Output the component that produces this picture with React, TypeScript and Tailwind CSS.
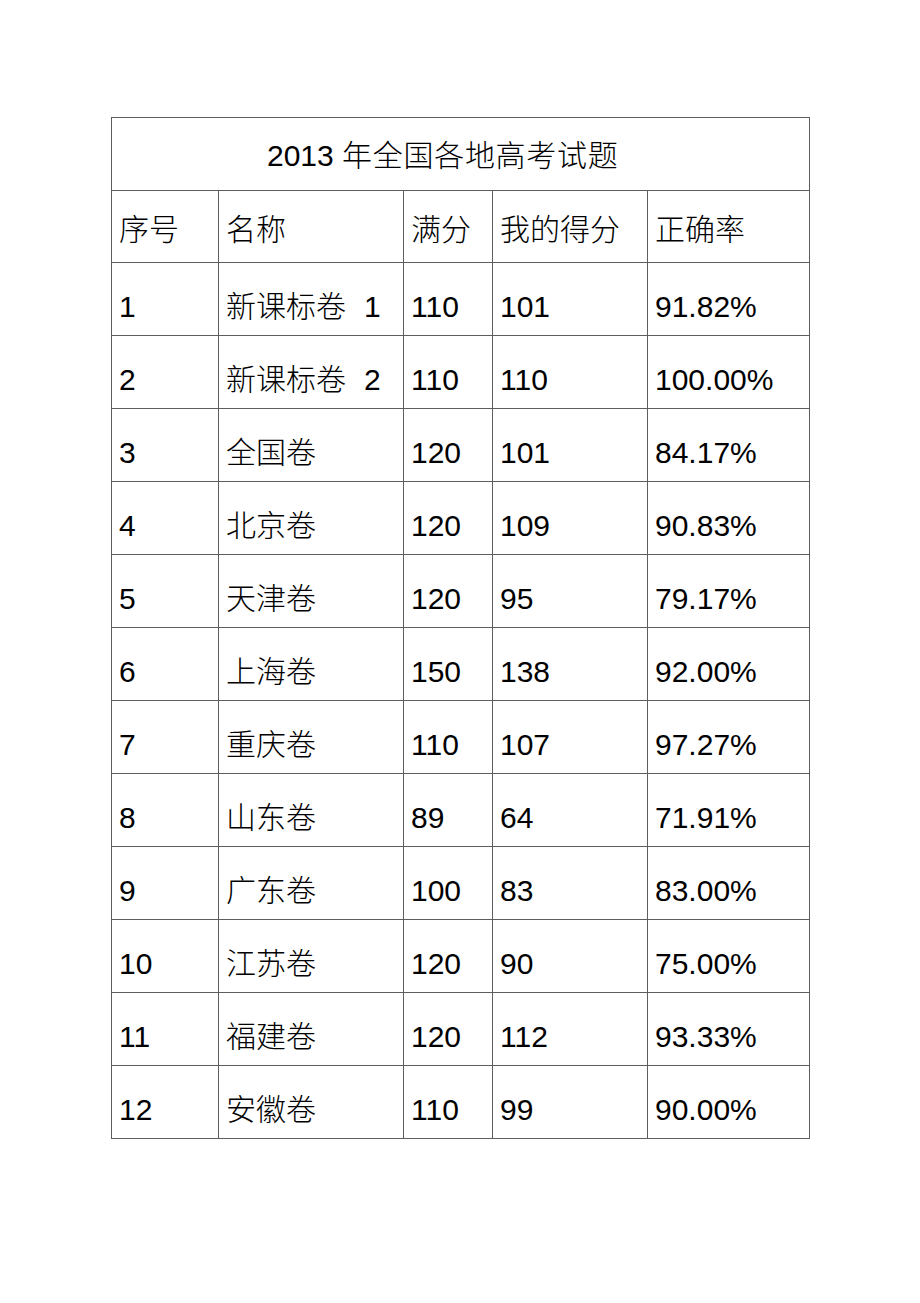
import React from 'react';

type Row = [string, string, string, string, string, string?];

const rows: Row[] = [
  ['1', '新课标卷', '110', '101', '91.82%', '1'],
  ['2', '新课标卷', '110', '110', '100.00%', '2'],
  ['3', '全国卷', '120', '101', '84.17%'],
  ['4', '北京卷', '120', '109', '90.83%'],
  ['5', '天津卷', '120', '95', '79.17%'],
  ['6', '上海卷', '150', '138', '92.00%'],
  ['7', '重庆卷', '110', '107', '97.27%'],
  ['8', '山东卷', '89', '64', '71.91%'],
  ['9', '广东卷', '100', '83', '83.00%'],
  ['10', '江苏卷', '120', '90', '75.00%'],
  ['11', '福建卷', '120', '112', '93.33%'],
  ['12', '安徽卷', '110', '99', '90.00%'],
];

// Chinese text in its own span
const Cjk = ({ children, wide }: { children: React.ReactNode; wide?: boolean }) => (
  <span className={`font-['Noto_Sans_CJK_SC',sans-serif] font-light ${wide ? 'tracking-[0.7px]' : ''}`}>{children}</span>
);

const cell = 'border border-[#5e5e5e] align-bottom pl-[7px]';

const App: React.FC = () => {
  return (
    <div className="min-h-[1303px] w-[920px] bg-white pt-[117px] pl-[111px] text-black font-['Liberation_Sans',Arial,sans-serif] text-[30px] leading-[30px]">
      <table className="border-collapse table-fixed w-[698px]">
        <colgroup>
          <col className="w-[107px]" />
          <col className="w-[185px]" />
          <col className="w-[89px]" />
          <col className="w-[155px]" />
          <col className="w-[162px]" />
        </colgroup>
        <tbody>
          <tr className="h-[73px]">
            <td colSpan={5} className={`${cell} pb-[19px] pl-[155px]`}>
              2013 <Cjk wide>年全国各地高考试题</Cjk>
            </td>
          </tr>
          <tr className="h-[72px]">
            {['序号', '名称', '满分', '我的得分', '正确率'].map((h) => (
              <td key={h} className={`${cell} pb-[17px]`}>
                <Cjk>{h}</Cjk>
              </td>
            ))}
          </tr>
          {rows.map(([no, name, full, mine, rate, suffix]) => (
            <tr key={no} className="h-[73px]">
              <td className={`${cell} pb-[13px]`}>{no}</td>
              <td className={`${cell} pb-[13px]`}>
                <Cjk>{name}</Cjk>
                {suffix && <span className="ml-[18px]">{suffix}</span>}
              </td>
              <td className={`${cell} pb-[13px]`}>{full}</td>
              <td className={`${cell} pb-[13px]`}>{mine}</td>
              <td className={`${cell} pb-[13px]`}>{rate}</td>
            </tr>
          ))}
        </tbody>
      </table>
    </div>
  );
};

export default App;
